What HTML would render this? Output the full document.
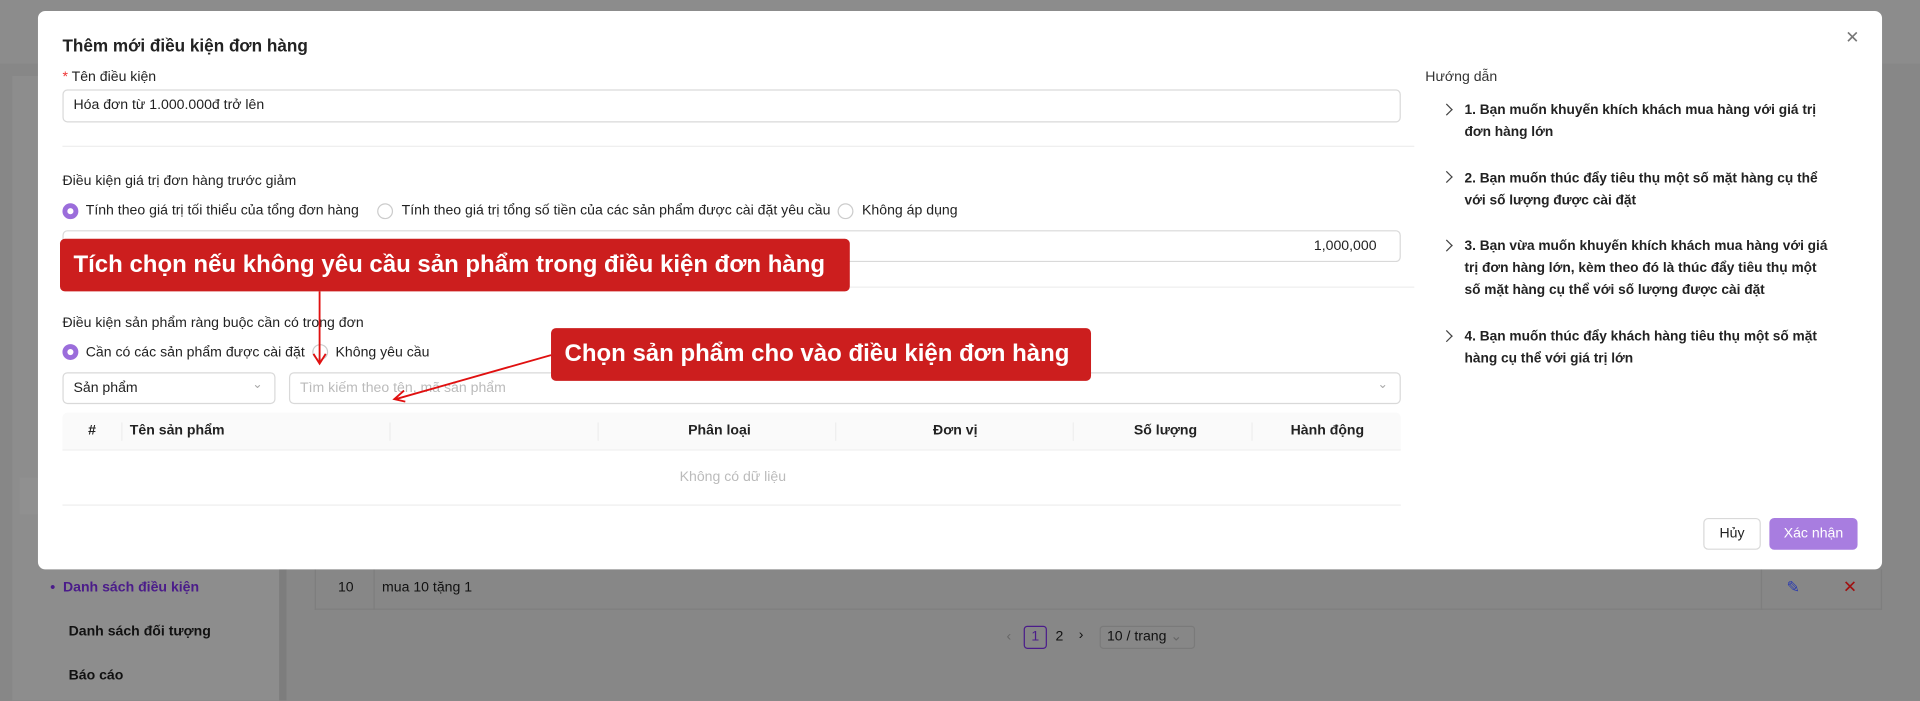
<!DOCTYPE html>
<html><head><meta charset="utf-8"><style>
*{box-sizing:border-box;margin:0;padding:0}
html,body{width:1920px;height:701px;overflow:hidden;background:#8a8a8a;font-family:"Liberation Sans",sans-serif}
#w{position:absolute;left:0;top:0;width:1568px;height:572px;transform:scale(1.22449);transform-origin:0 0;background:#8c8c8c;font-size:11.5px;color:#222}
.a{position:absolute;white-space:nowrap}
.inp{position:absolute;border:1px solid #d9d9d9;border-radius:4px;background:#fff}
.rad{position:absolute;width:13px;height:13px;border-radius:50%;border:1px solid #ccc;background:#fff}
.rad.on{border:4px solid #9b6ddb}
.hd{position:absolute;top:337px;height:31px;line-height:31px;font-weight:bold;font-size:11.5px;color:#222}
.sep{position:absolute;top:345px;height:15px;width:1px;background:#eee}
.g{font-weight:bold;font-size:11.2px;line-height:18px;color:#222}
.chev{position:absolute;left:1178px;width:7px;height:7px;border-right:1.3px solid #444;border-top:1.3px solid #444;transform:rotate(45deg)}
.call{position:absolute;background:#cc1e1e;border-radius:4px;color:#fff;font-size:19.6px;font-weight:bold;padding-left:11px;white-space:nowrap}
</style></head><body><div id="w">
<div class="a" style="left:0;top:52px;width:1568px;height:520px;background:#878787"></div>
<div class="a" style="left:10px;top:62px;width:218px;height:510px;background:#8d8d8d"></div>
<div class="a" style="left:228px;top:62px;width:6px;height:510px;background:#7d7d7d"></div>
<div class="a" style="left:16px;top:390px;width:20px;height:30px;background:#909090"></div>
<div class="a" style="left:41px;top:474px;color:#4b1c8a;font-weight:bold">•&nbsp; Danh sách điều kiện</div>
<div class="a" style="left:56px;top:510px;color:#111;font-weight:bold">Danh sách đối tượng</div>
<div class="a" style="left:56px;top:546px;color:#111;font-weight:bold">Báo cáo</div>
<div class="a" style="left:257px;top:465px;width:1280px;height:33px;border:1px solid #7e7e7e;border-top:0"></div>
<div class="a" style="left:305px;top:465px;width:1px;height:33px;background:#7e7e7e"></div>
<div class="a" style="left:1438px;top:465px;width:1px;height:33px;background:#7e7e7e"></div>
<div class="a" style="left:276px;top:474px;color:#111">10</div>
<div class="a" style="left:312px;top:474px;color:#111">mua 10 tặng 1</div>
<div class="a" style="left:1459px;top:472px;color:#2a3bb0;font-size:13px">✎</div>
<div class="a" style="left:1505px;top:471px;color:#a01010;font-size:14px">✕</div>
<div class="a" style="left:822px;top:514px;color:#666">‹</div>
<div class="a" style="left:836px;top:511px;width:19px;height:19px;border:1px solid #4b1c8a;border-radius:3px;text-align:center;line-height:17px;color:#4b1c8a">1</div>
<div class="a" style="left:862px;top:514px;color:#111">2</div>
<div class="a" style="left:881px;top:513px;color:#111">›</div>
<div class="a" style="left:898px;top:511px;width:78px;height:19px;border:1px solid #7a7a7a;border-radius:3px;line-height:17px;padding-left:5px;color:#111">10 / trang <span style="color:#666">⌄</span></div>
<div class="a" style="left:1508px;top:20px;color:#666;font-size:10px">▾</div>

<div class="a" style="left:31px;top:9px;width:1506px;height:456px;background:#fff;border-radius:6px"></div>
<div class="a" style="left:51px;top:29px;font-size:14px;font-weight:bold;color:#222">Thêm mới điều kiện đơn hàng</div>
<div class="a" style="left:1507px;top:22px;font-size:14px;color:#777">✕</div>
<div class="a" style="left:51px;top:57px"><span style="color:#e33">*</span> Tên điều kiện</div>
<div class="inp" style="left:51px;top:73px;width:1093px;height:27px"></div>
<div class="a" style="left:60px;top:80px">Hóa đơn từ 1.000.000đ trở lên</div>
<div class="a" style="left:51px;top:119px;width:1104px;height:1px;background:#eee"></div>
<div class="a" style="left:51px;top:142px">Điều kiện giá trị đơn hàng trước giảm</div>
<div class="rad on" style="left:51px;top:166px"></div>
<div class="a" style="left:70px;top:166px">Tính theo giá trị tối thiểu của tổng đơn hàng</div>
<div class="rad" style="left:308px;top:166px"></div>
<div class="a" style="left:328px;top:166px">Tính theo giá trị tổng số tiền của các sản phẩm được cài đặt yêu cầu</div>
<div class="rad" style="left:684px;top:166px"></div>
<div class="a" style="left:704px;top:166px">Không áp dụng</div>
<div class="inp" style="left:51px;top:188px;width:1093px;height:26px"></div>
<div class="a" style="left:1073px;top:195px">1,000,000</div>
<div class="a" style="left:51px;top:234px;width:1104px;height:1px;background:#eee"></div>
<div class="a" style="left:51px;top:258px">Điều kiện sản phẩm ràng buộc cần có trong đơn</div>
<div class="rad on" style="left:51px;top:281px"></div>
<div class="a" style="left:70px;top:282px">Cần có các sản phẩm được cài đặt</div>
<div class="rad" style="left:255px;top:281px"></div>
<div class="a" style="left:274px;top:282px">Không yêu cầu</div>
<div class="inp" style="left:51px;top:304px;width:174px;height:26px"></div>
<div class="a" style="left:60px;top:311px">Sản phẩm</div>
<div class="a" style="left:206px;top:309px;color:#aaa;font-size:10px">⌄</div>
<div class="inp" style="left:236px;top:304px;width:908px;height:26px"></div>
<div class="a" style="left:245px;top:311px;color:#bbb">Tìm kiếm theo tên, mã sản phẩm</div>
<div class="a" style="left:1125px;top:309px;color:#aaa;font-size:10px">⌄</div>
<div class="a" style="left:51px;top:337px;width:1093px;height:31px;background:#fafafa;border-bottom:1px solid #eee;border-radius:4px 4px 0 0"></div>
<div class="hd" style="left:72px">#</div>
<div class="hd" style="left:106px">Tên sản phẩm</div>
<div class="hd" style="left:562px">Phân loại</div>
<div class="hd" style="left:762px">Đơn vị</div>
<div class="hd" style="left:926px">Số lượng</div>
<div class="hd" style="left:1054px">Hành động</div>
<div class="sep" style="left:99px"></div><div class="sep" style="left:318px"></div><div class="sep" style="left:488px"></div><div class="sep" style="left:682px"></div><div class="sep" style="left:876px"></div><div class="sep" style="left:1022px"></div>
<div class="a" style="left:555px;top:384px;color:#bbb">Không có dữ liệu</div>
<div class="a" style="left:51px;top:412px;width:1093px;height:1px;background:#eee"></div>
<div class="a" style="left:1391px;top:423px;width:47px;height:26px;border:1px solid #d9d9d9;border-radius:4px;text-align:center;line-height:24px">Hủy</div>
<div class="a" style="left:1445px;top:423px;width:72px;height:26px;background:#a87de0;border-radius:4px;text-align:center;line-height:26px;color:#fff">Xác nhận</div>

<div class="a" style="left:1164px;top:57px;color:#333">Hướng dẫn</div>
<div class="chev" style="top:86px"></div><div class="a g" style="left:1196px;top:81px">1. Bạn muốn khuyến khích khách mua hàng với giá trị<br>đơn hàng lớn</div>
<div class="chev" style="top:141px"></div><div class="a g" style="left:1196px;top:137px">2. Bạn muốn thúc đẩy tiêu thụ một số mặt hàng cụ thể<br>với số lượng được cài đặt</div>
<div class="chev" style="top:197px"></div><div class="a g" style="left:1196px;top:192px">3. Bạn vừa muốn khuyến khích khách mua hàng với giá<br>trị đơn hàng lớn, kèm theo đó là thúc đẩy tiêu thụ một<br>số mặt hàng cụ thể với số lượng được cài đặt</div>
<div class="chev" style="top:271px"></div><div class="a g" style="left:1196px;top:266px">4. Bạn muốn thúc đẩy khách hàng tiêu thụ một số mặt<br>hàng cụ thể với giá trị lớn</div>

<div class="call" style="left:49px;top:195px;width:645px;height:43px;line-height:43px">Tích chọn nếu không yêu cầu sản phẩm trong điều kiện đơn hàng</div>
<div class="call" style="left:450px;top:268px;width:441px;height:43px;line-height:43px">Chọn sản phẩm cho vào điều kiện đơn hàng</div>
<svg class="a" style="left:0;top:0" width="1568" height="572"><g stroke="#e01010" stroke-width="1.5" fill="none">
<path d="M261 238V296M256 289L261 297L266 289"/>
<path d="M450 290L323 326M330 319L322 326L331 328"/></g></svg>
</div></body></html>
